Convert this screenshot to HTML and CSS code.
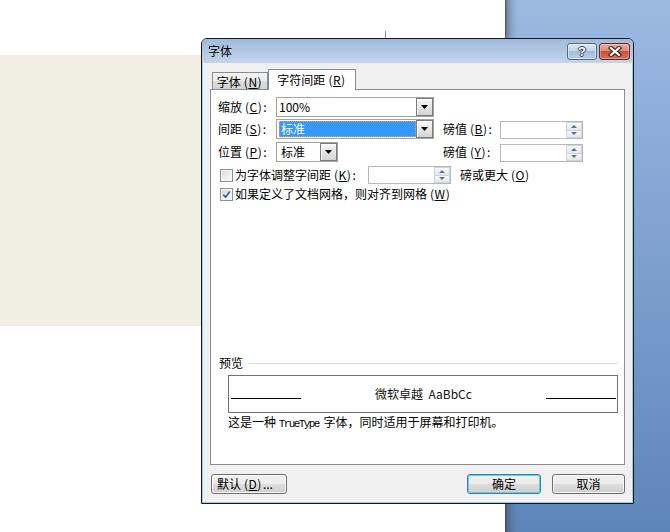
FILE: index.html
```html
<!DOCTYPE html>
<html lang="zh-CN">
<head>
<meta charset="utf-8">
<title>字体</title>
<link rel="stylesheet" href="styles.css">
</head>
<body>
<div class="desk">
  <div class="page">
    <div class="caret"></div>
    <div class="band"></div>
  </div>
  <div class="side"></div>

  <div class="dialog">
    <div class="titlebar">
      <span class="title">字体</span>
      <div class="tbtns">
        <div class="tbtn help"><span class="q">?</span></div>
        <div class="tbtn close">
          <svg width="14" height="11" viewBox="0 0 14 11"><path d="M3 2 L11 9 M11 2 L3 9" stroke="#4a241c" stroke-width="4.4" stroke-linecap="square" fill="none"/><path d="M3 2 L11 9 M11 2 L3 9" stroke="#fff" stroke-width="2.2" stroke-linecap="square" fill="none"/></svg>
        </div>
      </div>
    </div>

    <div class="content">
      <div class="tabs">
        <div class="tab">字体<span class="k">(<u>N</u>)</span></div>
        <div class="tab active">字符间距<span class="k">(<u>R</u>)</span></div>
      </div>

      <div class="panel">
        <div class="grid">
          <div class="lbl c1">缩放<span class="k">(<u>C</u>)</span>:</div>
          <div class="combo wide">
            <div class="field">100%</div>
            <div class="drop"><svg width="7" height="4" viewBox="0 0 7 4"><path d="M0 0 H7 L3.5 4 Z" fill="#000"/></svg></div>
          </div>

          <div class="lbl c1">间距<span class="k">(<u>S</u>)</span>:</div>
          <div class="combo wide">
            <div class="field"><span class="sel">标准</span></div>
            <div class="drop"><svg width="7" height="4" viewBox="0 0 7 4"><path d="M0 0 H7 L3.5 4 Z" fill="#000"/></svg></div>
          </div>
          <div class="lbl">磅值<span class="k">(<u>B</u>)</span>:</div>
          <div class="spin"><div class="spin-btns"><span class="up"></span><span class="dn"></span></div></div>

          <div class="lbl c1">位置<span class="k">(<u>P</u>)</span>:</div>
          <div class="combo short">
            <div class="field pad">标准</div>
            <div class="drop"><svg width="7" height="4" viewBox="0 0 7 4"><path d="M0 0 H7 L3.5 4 Z" fill="#000"/></svg></div>
          </div>
          <div class="lbl">磅值<span class="k">(<u>Y</u>)</span>:</div>
          <div class="spin"><div class="spin-btns"><span class="up"></span><span class="dn"></span></div></div>
        </div>

        <div class="crow first">
          <div class="chk"></div>
          <div class="clbl fixed">为字体调整字间距<span class="k">(<u>K</u>)</span>:</div>
          <div class="spin kern"><div class="spin-btns"><span class="up"></span><span class="dn"></span></div></div>
          <div class="clbl after">磅或更大<span class="k">(<u>O</u>)</span></div>
        </div>
        <div class="crow second">
          <div class="chk"><svg width="9" height="9" viewBox="0 0 9 9"><path d="M1.3 4.6 L3.6 7.2 L7.8 1.4" stroke="#3d5ca6" stroke-width="1.7" fill="none"/></svg></div>
          <div class="clbl">如果定义了文档网格，则对齐到网格<span class="k">(<u>W</u>)</span></div>
        </div>

        <div class="ph">
          <span>预览</span>
          <div class="ph-line"></div>
        </div>
        <div class="preview">
          <div class="pline"></div>
          <div class="ptext">微软卓越&nbsp; AaBbCc</div>
          <div class="pline"></div>
        </div>
        <div class="desc">这是一种 <span class="mono">TrueType</span> 字体，同时适用于屏幕和打印机。</div>
      </div>

      <div class="footer">
        <button class="btn left">默认<span class="k">(<u>D</u>)</span>...</button>
        <button class="btn ok">确定</button>
        <button class="btn cancel">取消</button>
      </div>
    </div>
  </div>
</div>
</body>
</html>
```

FILE: styles.css
```css
* { box-sizing: border-box; }
html, body { margin: 0; padding: 0; }
body {
  width: 670px;
  height: 532px;
  overflow: hidden;
  font-family: "Noto Sans CJK SC", "Noto Sans", sans-serif;
  font-size: 12px;
  line-height: 14px;
  color: #000;
}
u { text-decoration: underline; text-underline-offset: 1px; }
.k { margin: 0 1px 0 3px; letter-spacing: 0.5px; }

.desk {
  position: relative;
  width: 670px;
  height: 532px;
  display: flex;
  background: #fff;
}
.page {
  width: 505px;
  height: 532px;
  background: #fff;
  display: flex;
  flex-direction: column;
}
.caret {
  margin: 31px 0 0 385px;
  width: 1px;
  height: 8px;
  background: #8a8a8a;
}
.band {
  margin-top: 16px;
  height: 271px;
  background: #f1eee3;
}
.side {
  flex: 1;
  background:
    linear-gradient(to right, rgba(45,50,60,.8) 0, rgba(45,50,60,.35) 2px, rgba(45,50,60,.12) 7px, rgba(45,50,60,0) 13px),
    linear-gradient(#9cb9e1 0%, #7d9fd0 50%, #5e85b9 100%);
}

/* dialog window */
.dialog {
  position: absolute;
  left: 201px;
  top: 38px;
  width: 433px;
  height: 466px;
  border: 1px solid #15191e;
  border-radius: 6px 6px 0 0;
  background: #f0f0f0;
  box-shadow: inset 0 0 0 1px #8fd2f0;
  display: flex;
  flex-direction: column;
  overflow: hidden;
}
.titlebar {
  height: 24px;
  flex: none;
  display: flex;
  align-items: flex-start;
  padding: 0 3px 0 6px;
  background: linear-gradient(#a0bad8 0%, #b3c9e3 55%, #c2d5eb 100%);
}
.title { line-height: 24px; }
.tbtns {
  margin-left: auto;
  margin-top: 4px;
  display: flex;
  gap: 2px;
}
.tbtn {
  height: 17px;
  border-radius: 3px;
  display: flex;
  align-items: center;
  justify-content: center;
}
.help {
  width: 30px;
  border: 1px solid #4d6b8f;
  background: linear-gradient(#dde7f3 0%, #c2d4e9 45%, #a5bcd9 50%, #b7cce6 100%);
  box-shadow: inset 0 0 0 1px rgba(255,255,255,.45);
}
.q {
  font-family: "Liberation Sans", sans-serif;
  font-weight: bold;
  font-size: 13px;
  line-height: 15px;
  color: #fff;
  text-shadow: 1px 0 0 #2f3f55, -1px 0 0 #2f3f55, 0 1px 0 #2f3f55, 0 -1px 0 #2f3f55;
}
.close {
  width: 31px;
  border: 1px solid #6a2a20;
  background: linear-gradient(#eab0a2 0%, #dc8a76 45%, #c6503a 50%, #d27360 100%);
  box-shadow: inset 0 0 0 1px rgba(255,220,210,.35);
}

.content {
  flex: 1;
  display: flex;
  flex-direction: column;
  padding: 6px 8px 0 8px;
}

/* tabs */
.tabs {
  height: 20px;
  flex: none;
  display: flex;
  align-items: flex-end;
  padding-left: 2px;
  position: relative;
  z-index: 1;
}
.tab {
  width: 56px;
  height: 17px;
  border: 1px solid #898c95;
  border-bottom: none;
  background: linear-gradient(#f3f3f3 0%, #ebebeb 50%, #dddddd 51%, #d3d3d3 100%);
  display: flex;
  align-items: center;
  justify-content: center;
  padding-top: 1px;
  white-space: nowrap;
}
.tab.active {
  width: 88px;
  height: 21px;
  margin-bottom: -1px;
  background: #fff;
  padding-top: 0;
  padding-bottom: 1px;
}

.panel {
  height: 376px;
  flex: none;
  border: 1px solid #898c95;
  background: #fff;
  padding: 7px 0 0 7px;
  display: flex;
  flex-direction: column;
}

/* grid of combo rows */
.grid {
  display: grid;
  grid-template-columns: 58px 167px 57px 83px;
  grid-template-rows: 22px 23px 20px;
  align-items: start;
}
.c1 { grid-column: 1; }
.lbl { line-height: 20px; white-space: nowrap; }

.combo {
  height: 20px;
  border: 1px solid #a3a3a3;
  background: #fff;
  display: flex;
}
.combo.wide { width: 158px; }
.combo.short { width: 62px; }
.field {
  flex: 1;
  padding-left: 2px;
  line-height: 18px;
  white-space: nowrap;
}
.field.pad { padding-left: 4px; }
.sel {
  display: block;
  margin: 1px 0 1px 0;
  height: 16px;
  line-height: 14px;
  padding-left: 1px;
  background: #3399ff;
  color: #fff;
  border: 1px dotted #f0a030;
}
.drop {
  width: 17px;
  flex: none;
  border: 1px solid #7c7c7c;
  background: linear-gradient(#f7f7f7 0%, #e6e6e6 50%, #d4d4d4 100%);
  box-shadow: inset 1px 1px 0 #fff;
  display: flex;
  align-items: center;
  justify-content: center;
}
.drop svg { display: block; }

.spin {
  width: 83px;
  height: 18px;
  margin-top: 2px;
  border: 1px solid #b8b8b8;
  background: #fff;
  display: flex;
  justify-content: flex-end;
}
.spin-btns {
  width: 16px;
  display: flex;
  flex-direction: column;
}
.spin-btns span {
  flex: 1;
  display: flex;
  align-items: center;
  justify-content: center;
  border: 1px solid #d0d4da;
  background: linear-gradient(#fafafa, #e4e6ea);
}
.spin-btns .dn { border-top: none; }
.spin-btns .up::before {
  content: "";
  border-left: 3px solid transparent;
  border-right: 3px solid transparent;
  border-bottom: 3px solid #5a6f99;
}
.spin-btns .dn::before {
  content: "";
  border-left: 3px solid transparent;
  border-right: 3px solid transparent;
  border-top: 3px solid #5a6f99;
}

/* checkbox rows */
.crow {
  height: 18px;
  display: flex;
  align-items: center;
}
.crow.first { margin-top: 4px; }
.crow.second { margin-top: 1px; }
.chk {
  width: 13px;
  height: 13px;
  margin-left: 2px;
  border: 1px solid #8e8f8f;
  background: linear-gradient(135deg, #d4d4d4 0%, #f0f0f0 60%, #fbfbfb 100%);
  box-shadow: inset 0 0 0 1px #f6f6f6;
  display: flex;
  align-items: center;
  justify-content: center;
  flex: none;
}
.chk svg { display: block; }
.clbl { margin-left: 2px; white-space: nowrap; }
.clbl.fixed { width: 133px; }
.spin.kern { margin-top: 0; }
.clbl.after { margin-left: 9px; }

/* preview */
.ph {
  margin-top: 153px;
  height: 14px;
  display: flex;
  align-items: center;
  padding-left: 1px;
}
.ph-line {
  flex: 1;
  height: 1px;
  margin: 0 6px 0 5px;
  background: #d5dee5;
}
.preview {
  margin: 5px 0 0 10px;
  width: 390px;
  height: 38px;
  border: 1px solid #727272;
  display: flex;
  align-items: center;
  padding: 0 1px 0 2px;
}
.pline {
  width: 70px;
  height: 1px;
  background: #000;
  margin-top: 9px;
}
.ptext {
  flex: 1;
  text-align: center;
  color: #111;
}
.desc {
  margin: 2px 0 0 10px;
  white-space: nowrap;
}
.mono {
  font-family: "Liberation Mono", monospace;
  font-size: 11px;
  letter-spacing: -1.6px;
  margin-right: 2px;
}

/* footer buttons */
.footer {
  margin-top: 9px;
  height: 20px;
  flex: none;
  display: flex;
  padding-left: 1px;
}
.btn {
  height: 20px;
  margin: 0;
  padding: 0;
  font: inherit;
  color: #000;
  border: 1px solid #707070;
  border-radius: 3px;
  background: linear-gradient(#f2f2f2 0%, #ebebeb 50%, #dddddd 51%, #cfcfcf 100%);
  box-shadow: inset 0 0 0 1px rgba(255,255,255,.75);
  display: flex;
  align-items: center;
  justify-content: center;
  white-space: nowrap;
}
.btn.left { width: 76px; justify-content: flex-start; padding-left: 5px; }
.btn.ok {
  width: 74px;
  margin-left: auto;
  border-color: #3c7fb1;
  box-shadow: inset 0 0 0 1px #62cdf3;
}
.btn.cancel { width: 73px; margin-left: 11px; }
```
